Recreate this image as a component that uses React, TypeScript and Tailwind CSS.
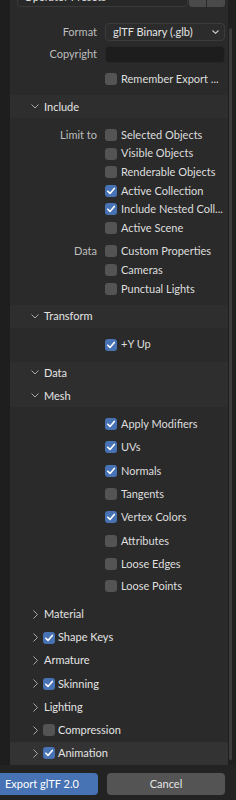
import React from "react";

const font = { fontFamily: "Lato, 'DejaVu Sans', sans-serif" };

const Check = ({ on }: { on?: boolean }) => (
  <div
    className={`w-[12px] h-[12px] rounded-[3px] shrink-0 flex items-center justify-center ${
      on ? "bg-[#4772b3]" : "bg-[#545454]"
    }`}
  >
    {on && (
      <svg width="12" height="12" viewBox="0 0 12 12">
        <path d="M2.8 6.2 L5 8.4 L9.3 3.4" stroke="#ffffff" strokeWidth="1.6" fill="none" strokeLinecap="round" strokeLinejoin="round" />
      </svg>
    )}
  </div>
);

const ChevDown = () => (
  <svg width="8" height="5" viewBox="0 0 8 5" className="shrink-0">
    <path d="M0.5 0.5 L4 4 L7.5 0.5" stroke="#a8a8a8" strokeWidth="1" fill="none" />
  </svg>
);

const ChevRight = () => (
  <svg width="5" height="9" viewBox="0 0 5 9" className="shrink-0">
    <path d="M0.5 0.5 L4.5 4.5 L0.5 8.5" stroke="#a8a8a8" strokeWidth="1" fill="none" />
  </svg>
);

const Header = ({ title }: { title: string }) => (
  <div className="h-[23px] flex items-center bg-[#2e2e2e] pl-[21px]">
    <ChevDown />
    <span className="ml-[5px] pt-[1px] text-[11px] text-[#e4e4e4]">{title}</span>
  </div>
);

const Row = ({ label, text, on, h = "h-[18.67px]" }: { label?: string; text: string; on?: boolean; h?: string }) => (
  <div className={`${h} flex items-center`}>
    <div className="w-[87px] shrink-0 text-right text-[11px] text-[#bdbdbd]">{label}</div>
    <div className="ml-[8px] flex items-center shrink-0">
      <Check on={on} />
      <span className="ml-[4px] text-[11px] text-[#dedede] whitespace-nowrap">{text}</span>
    </div>
  </div>
);

const SubHeader = ({ title, check, on, hover }: { title: string; check?: boolean; on?: boolean; hover?: boolean }) => (
  <div className={`h-[23.33px] flex items-center pl-[23px] ${hover ? "bg-[#333333]" : ""}`}>
    <ChevRight />
    {check ? (
      <div className="ml-[5px] flex items-center">
        <Check on={on} />
        <span className="ml-[3px] text-[11px] text-[#e4e4e4]">{title}</span>
      </div>
    ) : (
      <span className="ml-[6px] text-[11px] text-[#e4e4e4]">{title}</span>
    )}
  </div>
);

export default function App() {
  return (
    <div className="w-[236px] h-[800px] bg-[#232323] overflow-hidden flex flex-col" style={font}>
      <div className="h-[765px] flex shrink-0 overflow-hidden">
        <div className="w-[10px] bg-[#1e1e1e]" />
        <div className="w-[218px] bg-[#2a2a2a] flex flex-col">
          {/* top section */}
          <div className="pb-[10px] bg-[#2a2a2a]">
            <div className="-mt-[13px] h-[20px] ml-[7px] flex">
              <div className="w-[171px] rounded-[4px] bg-[#282828] border border-[#3a3a3a] flex items-center px-[6px]">
                <span className="text-[11px] text-[#dedede]">Operator Presets</span>
              </div>
              <div className="ml-[1px] w-[17px] bg-[#4a4a4a] rounded-l-[3px] flex items-center justify-center text-[11px] text-[#dedede]">+</div>
              <div className="ml-[1px] w-[18px] bg-[#4a4a4a] rounded-r-[3px] flex items-center justify-center text-[11px] text-[#dedede]">−</div>
            </div>
            <div className="mt-[16px] h-[18px] flex items-center">
              <div className="w-[87px] shrink-0 text-right text-[11px] text-[#bdbdbd]">Format</div>
              <div className="ml-[8px] w-[120px] h-[18px] rounded-[4px] bg-[#2c2c2c] border border-[#3b3b3b] flex items-center pl-[7px] pr-[5px]">
                <span className="text-[11px] text-[#e4e4e4] flex-1">glTF Binary (.glb)</span>
                <svg width="7" height="4" viewBox="0 0 7 4">
                  <path d="M0.5 0.5 L3.5 3.3 L6.5 0.5" stroke="#d0d0d0" strokeWidth="1.1" fill="none" />
                </svg>
              </div>
            </div>
            <div className="mt-[5px] h-[17px] flex items-center">
              <div className="w-[87px] shrink-0 text-right text-[11px] text-[#bdbdbd]">Copyright</div>
              <div className="ml-[8px] w-[120px] h-[17px] rounded-[4px] bg-[#1d1d1d] border border-[#262626]" />
            </div>
            <div className="mt-[10px] h-[12px] flex items-center">
              <div className="w-[87px] shrink-0" />
              <div className="ml-[8px] flex items-center shrink-0">
                <Check />
                <span className="ml-[4px] text-[11px] text-[#dedede] whitespace-nowrap">Remember Export ...</span>
              </div>
            </div>
          </div>

          {/* Include */}
          <Header title="Include" />
          <div className="pt-[7.7px] pb-[6.6px]">
            <Row label="Limit to" text="Selected Objects" />
            <Row text="Visible Objects" />
            <Row text="Renderable Objects" />
            <Row text="Active Collection" on />
            <Row text="Include Nested Coll..." on />
            <Row text="Active Scene" />
            <div className="h-[4.67px]" />
            <Row label="Data" text="Custom Properties" />
            <Row text="Cameras" />
            <Row text="Punctual Lights" />
          </div>

          {/* Transform */}
          <Header title="Transform" />
          <div className="pt-[7.67px] pb-[7.67px]">
            <Row text="+Y Up" on />
          </div>

          <Header title="Data" />
          <Header title="Mesh" />
          <div className="pt-[5.3px] pb-[7px]">
            <Row text="Apply Modifiers" on h="h-[23.33px]" />
            <Row text="UVs" on h="h-[23.33px]" />
            <Row text="Normals" on h="h-[23.33px]" />
            <Row text="Tangents" h="h-[23.33px]" />
            <Row text="Vertex Colors" on h="h-[23.33px]" />
            <Row text="Attributes" h="h-[23.33px]" />
            <Row text="Loose Edges" h="h-[23.33px]" />
            <Row text="Loose Points" h="h-[20px]" />
          </div>

          <SubHeader title="Material" />
          <SubHeader title="Shape Keys" check on />
          <SubHeader title="Armature" />
          <SubHeader title="Skinning" check on />
          <SubHeader title="Lighting" />
          <SubHeader title="Compression" check />
          <SubHeader title="Animation" check on hover />
        </div>
        <div className="w-[8px] bg-[#1f1f1f] flex">
          <div className="w-[3px] ml-[1px] mt-[28px] mb-[5px] bg-[#3c3c3c] rounded-full" />
        </div>
      </div>
      <div className="pt-[8px] flex">
        <div className="w-[98px] h-[22px] rounded-r-[4px] bg-[#4772b3] flex items-center pl-[5px] text-[11px] text-white">
          Export glTF 2.0
        </div>
        <div className="ml-[9px] w-[118px] h-[22px] rounded-[4px] bg-[#545454] flex items-center justify-center text-[11px] text-[#e4e4e4]">
          Cancel
        </div>
      </div>
    </div>
  );
}
